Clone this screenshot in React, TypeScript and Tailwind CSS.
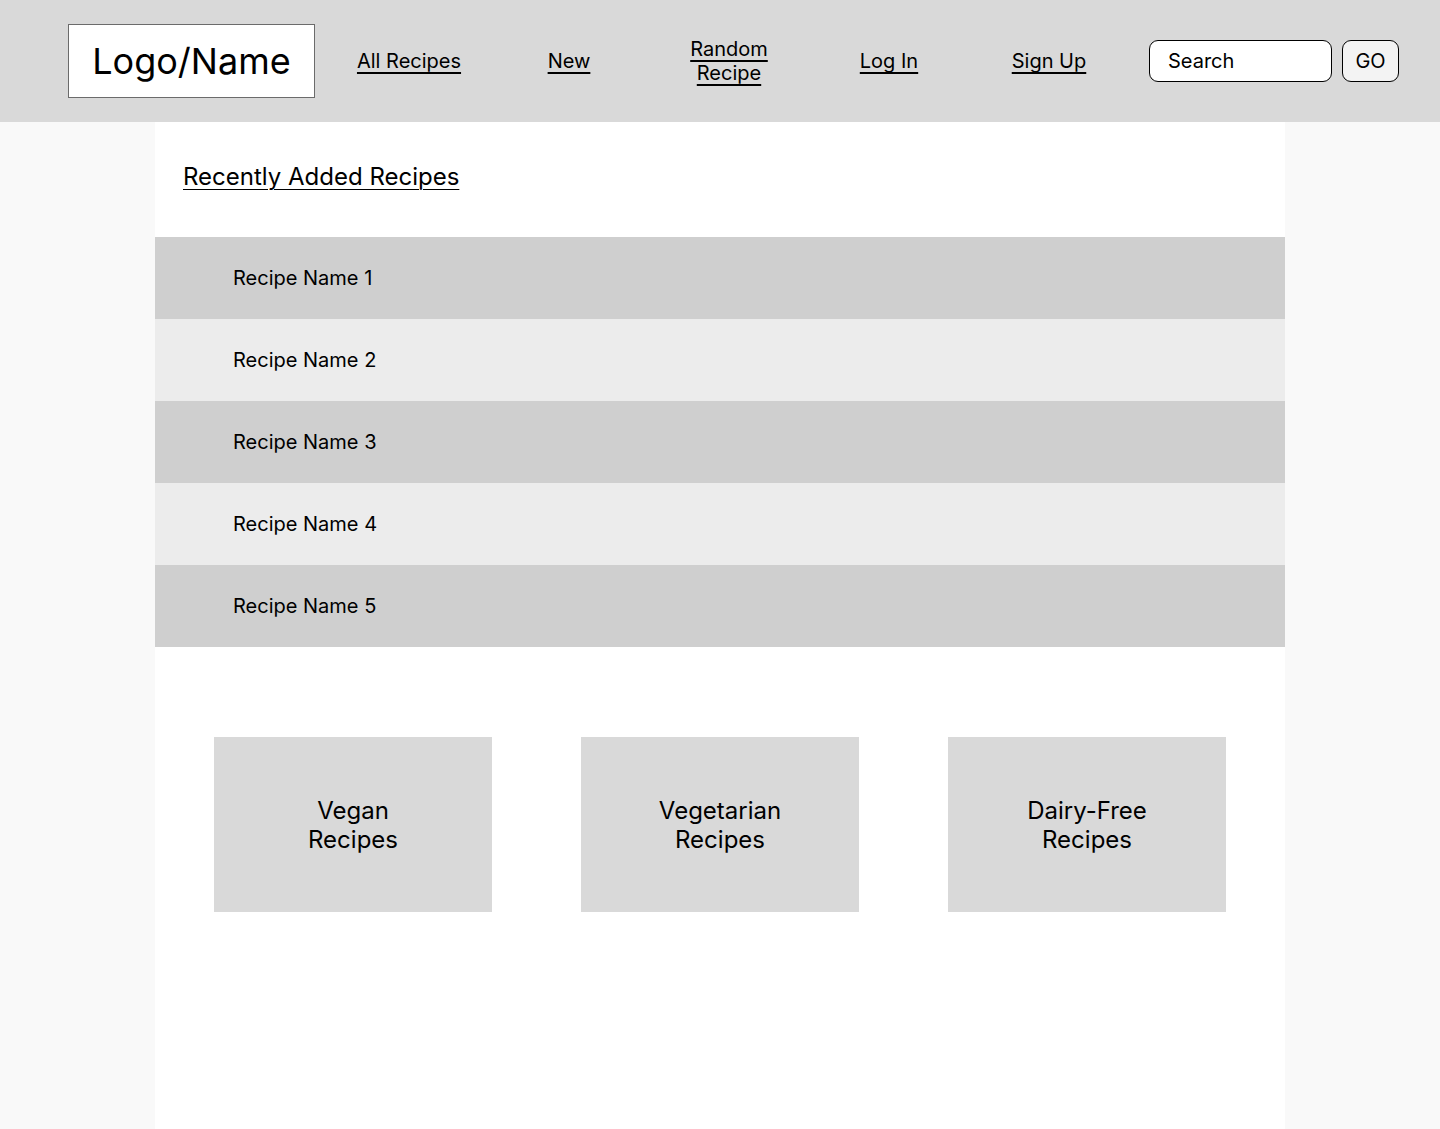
const NAV = ["All Recipes", "New", "Random\nRecipe", "Log In", "Sign Up"];
const RECIPES = ["Recipe Name 1", "Recipe Name 2", "Recipe Name 3", "Recipe Name 4", "Recipe Name 5"];
const CATEGORIES = ["Vegan\nRecipes", "Vegetarian\nRecipes", "Dairy-Free\nRecipes"];

export default function App() {
  return (
    <div className="min-h-[1129px] bg-[#f9f9f9] text-black font-['Inter',sans-serif]">
      {/* Header */}
      <header className="h-[122px] bg-[#d9d9d9] flex items-center pl-[68px] pr-[41px]">
        <div className="w-[247px] h-[74px] bg-white border-[1.5px] border-[#6b6b6b] flex items-center justify-center text-[36px] leading-none">
          Logo/Name
        </div>
        <nav className="ml-[14px] flex items-center">
          {NAV.map((item) => (
            <a
              key={item}
              href="#"
              className="w-[160px] text-center text-[20px] leading-[24px] whitespace-pre-line underline underline-offset-[4px]"
            >
              {item}
            </a>
          ))}
        </nav>
        <div className="ml-[20px] flex gap-[10px]">
          <div className="w-[183px] h-[42px] bg-white border border-black rounded-[9px] flex items-center pl-[18px] text-[20px]">
            Search
          </div>
          <button className="w-[57px] h-[42px] bg-[#f3f3f3] border border-black rounded-[9px] text-[20px]">
            GO
          </button>
        </div>
      </header>

      {/* Main column */}
      <main className="w-[1130px] ml-[155px] bg-white min-h-[1007px]">
        <div className="pt-[40px] pb-[45px] pl-[28px]">
          <h2 className="text-[24px] leading-[30px] underline underline-offset-[4px] decoration-1">
            Recently Added Recipes
          </h2>
        </div>

        <div className="flex flex-col">
          {RECIPES.map((name, i) => (
            <div
              key={name}
              className={`h-[82px] flex items-center pl-[78px] text-[20px] ${i % 2 === 0 ? "bg-[#cfcfcf]" : "bg-[#ececec]"}`}
            >
              {name}
            </div>
          ))}
        </div>

        <div className="pt-[90px] px-[59px] flex justify-between">
          {CATEGORIES.map((c) => (
            <div
              key={c}
              className="w-[278px] h-[175px] bg-[#d9d9d9] flex items-center justify-center text-center text-[24px] leading-[29px] whitespace-pre-line"
            >
              {c}
            </div>
          ))}
        </div>
      </main>
    </div>
  );
}
